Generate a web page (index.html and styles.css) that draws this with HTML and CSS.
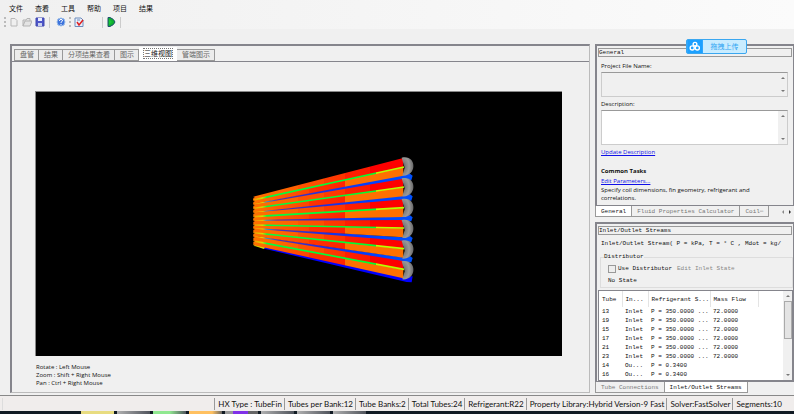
FILE: index.html
```html
<!DOCTYPE html>
<html lang="zh">

<head>
    <meta charset="UTF-8">
    <meta name="viewport" content="width=device-width, initial-scale=1.0">
    <title>CoilDesigner</title>
    <link rel="stylesheet" href="styles.css">
</head>

<body>
    <div class="window">
        <nav class="menu">
            <button>文件</button>
            <button>查看</button>
            <button>工具</button>
            <button>帮助</button>
            <button>项目</button>
            <button>结果</button>
        </nav>
        <div class="toolbar">
            <span class="grip"></span>
            <button aria-label="New"><svg viewBox="0 0 10 10"><path d="M2 1.500h4l2 2v5.500H2z" fill="#f0f0f0" stroke="#b8b8b8"/></svg></button>
            <button aria-label="Open"><svg viewBox="0 0 10 10"><path d="M1 9V3h3l1-1.500h3V4M1 9l2-5h7L8 9z" fill="#e4e4e4" stroke="#b4b4b4"/></svg></button>
            <button aria-label="Save"><svg viewBox="0 0 10 10"><path d="M1 1h8v8H1z" fill="#4d55c8" stroke="#4048b0"/><path d="M3 1h4v3H3z" fill="#e8ecff"/><path d="M3 6h4v3H3z" fill="#c8d0ee"/></svg></button>
            <span class="split"></span>
            <button aria-label="Help"><svg viewBox="0 0 10 10"><circle cx="5" cy="5" r="4" fill="#3d73dc" stroke="#9abde9"/><path d="M3.500 4q0-1.700 1.500-1.700T6.500 4L5 5.300v.7M5 7v1" fill="none" stroke="#fff"/></svg></button>
            <span class="grip"></span>
            <button aria-label="Check"><svg viewBox="0 0 10 10"><path d="M1 1h6l2 2v6.500H1z" fill="#e8f0fb" stroke="#6d8cbd"/><path d="M3 3h3" stroke="#6d8cbd"/><path d="M3 5l2 3 4-5" fill="none" stroke="#e02020" stroke-width="1.500"/></svg></button>
            <span class="split wide"></span>
            <button aria-label="Run"><svg viewBox="0 0 10 10"><path d="M2 .5h2Q8 2 9 5 8 8 4 9.500H2z" fill="#10b030" stroke="#205070"/><path d="M3 2v6l3-3z" fill="#18c838"/></svg></button>
            <span class="split"></span>
        </div>

        <main class="work">
            <section class="view">
                <div class="tabs">
                    <button>盘管</button>
                    <button>结果</button>
                    <button>分项结果查看</button>
                    <button>图示</button>
                    <button class="active"><span>三维视图</span></button>
                    <button>管端图示</button>
                </div>
                <div class="page">
                    <svg class="scene" viewBox="0 0 526 264">
                        <defs>
                            <linearGradient id="hot" gradientUnits="userSpaceOnUse" x1="40" y1="0" x2="490" y2="0">
                                <stop offset="0" stop-color="#ff7000"/>
                                <stop offset=".3" stop-color="#ff6000"/>
                                <stop offset=".3" stop-color="#ff5400"/>
                                <stop offset=".47" stop-color="#ff4c00"/>
                                <stop offset=".47" stop-color="#ff3c00"/>
                                <stop offset=".61" stop-color="#ff3400"/>
                                <stop offset=".61" stop-color="#ff2000"/>
                                <stop offset=".78" stop-color="#ff1800"/>
                                <stop offset=".78" stop-color="#ff0000"/>
                            </linearGradient>
                            <linearGradient id="warm" gradientUnits="userSpaceOnUse" x1="40" y1="0" x2="490" y2="0">
                                <stop offset="0" stop-color="#ff7400"/>
                                <stop offset=".2" stop-color="#ff5800"/>
                                <stop offset=".37" stop-color="#ff4400"/>
                                <stop offset=".37" stop-color="#ff3400"/>
                                <stop offset=".61" stop-color="#ff2400"/>
                                <stop offset=".61" stop-color="#ff7000"/>
                            </linearGradient>
                            <linearGradient id="mid" gradientUnits="userSpaceOnUse" x1="40" y1="0" x2="490" y2="0">
                                <stop offset="0" stop-color="#ff9000"/>
                                <stop offset=".06" stop-color="#d0e000"/>
                                <stop offset=".09" stop-color="#00ff40"/>
                                <stop offset=".82" stop-color="#00ff30"/>
                                <stop offset=".82" stop-color="#b8ff00"/>
                            </linearGradient>
                            <linearGradient id="cold" gradientUnits="userSpaceOnUse" x1="40" y1="0" x2="515" y2="0">
                                <stop offset="0" stop-color="#ff8000"/>
                                <stop offset=".06" stop-color="#e0e000"/>
                                <stop offset=".08" stop-color="#20a0e0"/>
                                <stop offset=".15" stop-color="#5030b0"/>
                                <stop offset=".45" stop-color="#2030e0"/>
                                <stop offset=".75" stop-color="#0040ff"/>
                                <stop offset="1" stop-color="#0050ff"/>
                            </linearGradient>
                            <radialGradient id="bend" cx=".1" cy=".5" r=".9">
                                <stop offset="0" stop-color="#555"/>
                                <stop offset=".3" stop-color="#808080"/>
                                <stop offset=".6" stop-color="#999"/>
                                <stop offset="1" stop-color="#666"/>
                            </radialGradient>
                        </defs>
                        <g transform="translate(204 53) scale(.3333)">
                            <g fill="url(#cold)">
                                <path d="M40 175L487 90 510 86 518 92 514 106 487 104 40 181z"/>
                                <path d="M40 199L487 152 510 148 518 154 514 167 487 165 40 205z"/>
                                <path d="M40 223L487 215 510 211 518 217 514 229 487 227 40 229z"/>
                                <path d="M40 247L487 277 510 273 518 279 514 291 487 290 40 253z"/>
                                <path d="M40 271L487 337 510 333 518 339 514 352 487 352 40 277z"/>
                                <path d="M60 300L487 396 518 394 515 412 500 411 60 308z" fill="#0000ff"/>
                                <path d="M40 297L75 306 72 312 40 302z" fill="#d0e000"/>
                            </g>
                            <g fill="url(#hot)">
                                <path d="M40 155L490 39V68L40 167z"/>
                                <path d="M40 179L490 101V128L40 190z"/>
                                <path d="M40 203L490 163V190L40 214z"/>
                                <path d="M40 227L490 225V251L40 239z"/>
                                <path d="M40 251L490 287V313L40 263z"/>
                                <path d="M40 275L490 348V375L40 287z"/>
                            </g>
                            <g fill="url(#warm)">
                                <path d="M40 166L490 67V92L40 177z"/>
                                <path d="M40 189L490 127V154L40 201z"/>
                                <path d="M40 213L490 189V216L40 225z"/>
                                <path d="M40 238L490 250V277L40 249z"/>
                                <path d="M40 262L490 312V338L40 273z"/>
                                <path d="M40 286L490 374V400L40 300z"/>
                            </g>
                            <g fill="url(#bend)">
                                <path d="M485 38C532 28 532 96 487 92L494 68z"/>
                                <path d="M485 100C532 90 532 158 487 154L494 130z"/>
                                <path d="M485 162C532 152 532 220 487 216L494 192z"/>
                                <path d="M485 225C532 215 532 283 487 279L494 255z"/>
                                <path d="M485 287C532 277 532 345 487 341L494 317z"/>
                                <path d="M485 349C532 339 532 407 487 403L494 379z"/>
                            </g>
                            <g fill="none" stroke="url(#mid)" stroke-width="5">
                                <path d="M40 165L492 66"/>
                                <path d="M40 190L492 126"/>
                                <path d="M40 215L492 188"/>
                                <path d="M40 240L492 249"/>
                                <path d="M40 263L492 311"/>
                                <path d="M40 288L492 373"/>
                            </g>
                            <path d="M41 155V302" stroke="#000" stroke-width="4" stroke-dasharray="3 9"/>
                        </g>
                    </svg>
                    <p class="hint">Rotate : Left Mouse<br>Zoom : Shift + Right Mouse<br>Pan : Ctrl + Right Mouse</p>
                </div>
            </section>

            <aside class="side">
                <section class="panel general">
                    <h2>General</h2>
                    <button class="upload">
                        <svg viewBox="0 0 17 14"><rect width="17" height="14" fill="#1ca0ff"/><g fill="none" stroke="#fff" stroke-width="1.500"><circle cx="8.500" cy="4.500" r="2"/><circle cx="5.500" cy="8.500" r="2.200"/><circle cx="11" cy="8.500" r="2.200"/></g></svg>
                        <span>拖拽上传</span>
                    </button>
                    <div class="form">
                        <label for="file">Project File Name:</label>
                        <div class="box grey"><textarea id="file" readonly></textarea><span class="bar"><i class="up"></i><i class="down"></i></span></div>
                        <label for="desc">Description:</label>
                        <div class="box tall"><textarea id="desc"></textarea><span class="bar"><i class="up"></i><i class="down"></i></span></div>
                        <a href="#">Update Description</a>
                        <h3>Common Tasks</h3>
                        <a href="#">Edit Parameters...</a>
                        <p>Specify coil dimensions, fin geometry, refrigerant and correlations.</p>
                    </div>
                </section>
                <div class="sheets">
                    <button class="active">General</button>
                    <button>Fluid Properties Calculator</button>
                    <button>Coil⋯</button>
                    <span class="arrows"><i class="left"></i><i class="right"></i></span>
                </div>

                <section class="panel streams">
                    <h2>Inlet/Outlet Streams</h2>
                    <p class="units">Inlet/Outlet Stream( P = kPa, T = ° C , Mdot = kg/</p>
                    <fieldset>
                        <legend>Distributor</legend>
                        <div class="row">
                            <label><input type="checkbox">Use Distributor</label>
                            <span class="off">Edit Inlet State</span>
                        </div>
                        <p>No State</p>
                    </fieldset>
                    <div class="list">
                        <table>
                            <thead>
                                <tr><th>Tube</th><th>In...</th><th>Refrigerant S...</th><th>Mass Flow</th></tr>
                            </thead>
                            <tbody>
                                <tr><td>13</td><td>Inlet</td><td>P = 350.0000 ...</td><td>72.0000</td></tr>
                                <tr><td>19</td><td>Inlet</td><td>P = 350.0000 ...</td><td>72.0000</td></tr>
                                <tr><td>15</td><td>Inlet</td><td>P = 350.0000 ...</td><td>72.0000</td></tr>
                                <tr><td>17</td><td>Inlet</td><td>P = 350.0000 ...</td><td>72.0000</td></tr>
                                <tr><td>21</td><td>Inlet</td><td>P = 350.0000 ...</td><td>72.0000</td></tr>
                                <tr><td>23</td><td>Inlet</td><td>P = 350.0000 ...</td><td>72.0000</td></tr>
                                <tr><td>14</td><td>Ou...</td><td>P = 0.3400</td><td></td></tr>
                                <tr><td>16</td><td>Ou...</td><td>P = 0.3400</td><td></td></tr>
                            </tbody>
                        </table>
                        <span class="bar"><i class="up"></i><b></b><i class="down"></i></span>
                    </div>
                </section>
                <div class="sheets">
                    <button>Tube Connections</button>
                    <button class="active">Inlet/Outlet Streams</button>
                </div>
            </aside>
        </main>

        <footer class="status">
            <span class="fill"></span>
            <span>HX Type : TubeFin</span>
            <span>Tubes per Bank:12</span>
            <span>Tube Banks:2</span>
            <span>Total Tubes:24</span>
            <span>Refrigerant:R22</span>
            <span>Property Library:Hybrid Version-9 Fast</span>
            <span>Solver:FastSolver</span>
            <span>Segments:10</span>
        </footer>
        <div class="taskbar">
            <i class="yellow"></i>
            <i></i>
            <i class="green"></i>
            <i class="orange"></i>
            <i class="purple"></i>
            <i></i>
            <i></i>
            <i></i>
        </div>
    </div>
</body>

</html>
```

FILE: styles.css
```css
* {
    box-sizing: border-box;
}

body {
    margin: 0;
    background: #fff;
    font-family: "Open Sans", "Noto Sans CJK SC", sans-serif;
    font-size: 7px;
    color: #111;
}

button {
    border: 0;
    padding: 0;
    background: none;
    font: inherit;
    color: inherit;
    white-space: nowrap;
}

h2, h3, p {
    margin: 0;
    font-weight: normal;
}

.window {
    display: flex;
    flex-direction: column;
    height: 100vh;
    margin-right: 5px;
    background: #f0f0f0;
    overflow: hidden;
}

.menu {
    display: flex;
    gap: 12px;
    height: 15px;
    padding-left: 9px;
    background: linear-gradient(90deg, #f0f0f0, #fbfbfb);
}

.toolbar {
    display: flex;
    align-items: center;
    height: 14px;
    padding-left: 4px;
    background: linear-gradient(90deg, #f0f0f0, #fbfbfb);
}

.toolbar button {
    width: 10px;
    height: 10px;
    margin-right: 3px;
}

.toolbar svg {
    display: block;
    width: 10px;
    height: 10px;
}

.grip {
    height: 10px;
    margin-right: 3px;
    border-left: 2px dotted #bbb;
}

.split {
    height: 11px;
    margin: 0 6px 0 1px;
    border-left: 1px solid #ccc;
}

.wide {
    margin: 0 3px 0 15px;
}

.work {
    display: flex;
    flex: 1;
    gap: 5px;
    min-height: 0;
    padding-top: 15px;
}

.view {
    display: flex;
    flex: 1;
    flex-direction: column;
    margin: 0 0 2px 10px;
    border: 1px solid #bbb;
    border-left: 2px solid #85858c;
    border-top: 2px solid #85858c;
}

.tabs {
    display: flex;
    align-items: flex-end;
    height: 15px;
    padding-left: 2px;
}

.tabs button {
    height: 12px;
    padding: 0 4px 0 5px;
    border: 1px solid #999;
    border-left-width: 0;
    background: #ececec;
    color: #666;
    line-height: 10px;
}

.tabs button:first-child {
    border-left-width: 1px;
}

.tabs .active {
    height: 14px;
    border-color: #fff;
    background: #fff;
    color: #111;
}

.tabs .active span {
    outline: 1px dotted #777;
}

.page {
    flex: 1;
    padding: 29px 27px 0 23px;
    border-top: 1px solid #85858c;
}

.scene {
    display: block;
    width: 100%;
    background: #000;
    border-top: 1px solid #888;
    border-left: 1px solid #888;
}

.hint {
    margin-top: 7px;
    padding-left: 1px;
    font-size: 6px;
    line-height: 8px;
}

.side {
    display: flex;
    flex-direction: column;
    width: 199px;
}

.panel {
    position: relative;
    padding: 2px 0 0 1px;
    border: 1px solid #85858c;
    border-top-width: 2px;
    border-left-width: 2px;
}

.panel h2 {
    height: 9px;
    margin-right: 1px;
    border: 1px solid #999;
    font: 6px/7px "Liberation Mono", monospace;
}

.general {
    height: 162px;
}

.upload {
    position: absolute;
    left: 89px;
    top: -7px;
    display: flex;
    width: 61px;
    height: 15px;
    border: 1px solid #3ba7f0;
    border-radius: 2px;
    background: #c9ecff;
    color: #2fa4f2;
    line-height: 13px;
}

.upload svg {
    width: 16px;
    height: 13px;
}

.upload span {
    flex: 1;
}

.form {
    display: flex;
    flex-direction: column;
    align-items: flex-start;
    padding: 5px 5px 0 3px;
    font-size: 6px;
    line-height: 9px;
}

.box {
    display: flex;
    width: 100%;
    height: 25px;
    margin: 1px 0 3px;
    border: 1px solid #ccc;
    border-top-color: #999;
    background: #fff;
}

.box textarea {
    flex: 1;
    width: 0;
    border: 0;
    padding: 0;
    background: none;
    resize: none;
}

.grey {
    background: #f0f0f0;
}

.tall {
    height: 35px;
}

.bar {
    display: flex;
    flex-direction: column;
    align-items: center;
    justify-content: space-between;
    width: 9px;
    padding: 4px 0;
    background: #f0f0f0;
}

.up, .down {
    border: 2px solid transparent;
}

.up {
    border-top: 0;
    border-bottom-color: #777;
}

.down {
    border-bottom: 0;
    border-top-color: #777;
}

a {
    color: #1010e8;
}

.form h3 {
    margin-top: 9px;
    font-size: 6px;
    font-weight: bold;
    line-height: 11px;
}

.form p {
    padding-right: 20px;
    line-height: 8px;
}

.sheets {
    display: flex;
    height: 12px;
    margin-bottom: 4px;
    font: 6px "Liberation Mono", monospace;
}

.sheets:last-child {
    margin-bottom: 1px;
}

.sheets button {
    height: 11px;
    padding: 0 5px;
    border: 1px solid #999;
    border-top: 0;
    border-left: 0;
    color: #777;
}

.sheets button:first-child {
    border-left: 1px solid #999;
}

.sheets .active {
    background: #fff;
    color: #111;
}

.arrows {
    display: flex;
    align-items: center;
    gap: 5px;
    margin: 0 3px 0 auto;
}

.left, .right {
    border: 2px solid transparent;
}

.left {
    border-left: 0;
    border-right-color: #888;
}

.right {
    border-right: 0;
    border-left-color: #333;
}

.streams {
    display: flex;
    flex: 1;
    flex-direction: column;
    min-height: 0;
    font: 6px/8px "Liberation Mono", monospace;
}

.units {
    padding: 5px 3px;
    white-space: nowrap;
}

fieldset {
    margin: 0 0 2px 2px;
    padding: 4px 7px 2px;
    border: 1px solid #ddd;
}

fieldset p {
    margin-top: 4px;
}

legend {
    padding: 0;
    margin-left: -4px;
}

.row {
    display: flex;
    gap: 5px;
}

.row label {
    display: flex;
    align-items: center;
    gap: 2px;
}

.row input {
    appearance: none;
    width: 8px;
    height: 8px;
    margin: 0;
    border: 1px solid #999;
    background: #eee;
}

.off {
    color: #888;
}

.list {
    display: flex;
    flex: 1;
    justify-content: space-between;
    align-items: flex-start;
    min-height: 0;
    border: 1px solid #85858c;
    background: #fff;
    overflow: hidden;
}

.list .bar {
    height: 100%;
}

table {
    width: 160px;
    border-collapse: collapse;
    table-layout: fixed;
}

th, td {
    height: 9px;
    padding: 0 0 0 3px;
    font-weight: normal;
    text-align: left;
    line-height: 9px;
    white-space: nowrap;
}

th {
    height: 16px;
    border-right: 1px solid #e4e4e4;
}

th:nth-child(1) {
    width: 23px;
}

th:nth-child(2) {
    width: 26px;
}

th:nth-child(3) {
    width: 62px;
}

.list .bar b {
    width: 8px;
    height: 38px;
    margin: 4px 0 auto;
    border: 1px solid #aaa;
    background: #e4e4e4;
}

.status {
    display: flex;
    height: 16px;
    padding: 2px 10px 1px 2px;
    border-top: 1px solid #888;
    background: #f0edec;
    font-family: Lato, sans-serif;
    font-size: 8px;
    line-height: 12px;
}

.status span {
    padding: 0 2px 0 3px;
    border-left: 1px solid #999;
    white-space: nowrap;
}

.status .fill {
    flex: 1;
    border-left-color: #ddd;
}

.taskbar {
    display: flex;
    gap: 3px;
    height: 3px;
    padding-left: 81px;
    background: #111b24;
}

.taskbar i {
    width: 33px;
    background: linear-gradient(90deg, #b0b0b0, #50545c);
}

.taskbar .yellow {
    background: #e8dc80;
}

.taskbar .green {
    background: linear-gradient(90deg, #90e890 50%, #50545c);
}

.taskbar .orange {
    background: linear-gradient(90deg, #ffc060 70%, #666);
}

.taskbar .purple {
    background: linear-gradient(90deg, #999 25%, #8030e8 25%, #8030e8 70%, #666 70%);
}
```
